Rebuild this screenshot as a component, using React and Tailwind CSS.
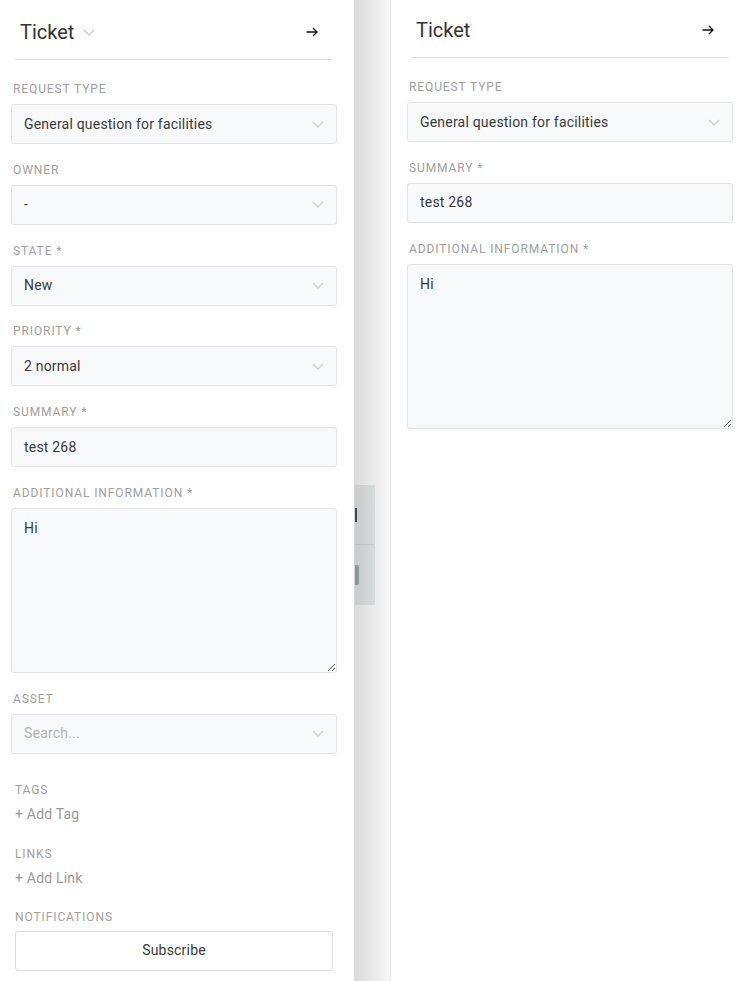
import React from "react";

const font = { fontFamily: "Roboto, 'Noto Sans', sans-serif" };

function Chevron({ className = "" }) {
  return (
    <svg width="12" height="7" viewBox="0 0 12 7" className={className} fill="none">
      <path d="M1 1 L6 6 L11 1" stroke="currentColor" strokeWidth="1.4" />
    </svg>
  );
}

function Arrow() {
  return (
    <svg width="12" height="10" viewBox="0 0 12 10" fill="none">
      <path d="M0.5 5 H11 M7 1 L11 5 L7 9" stroke="#111" strokeWidth="1.3" />
    </svg>
  );
}

function Label({ children, className = "" }) {
  return (
    <div className={`pt-[1px] text-[12px] leading-[16px] tracking-[0.9px] uppercase text-[#a0a0a0] pl-[2px] ${className}`}>
      {children}
    </div>
  );
}

function Select({ label, value, placeholder }) {
  return (
    <div className="mb-[16.8px]">
      <Label>{label}</Label>
      <div className="mt-[7px] h-[40px] rounded-[3px] border border-[#e3e4e6] bg-[#f8f9fa] flex items-center justify-between pl-[12px] pr-[12px]">
        <span className={`text-[14px] tracking-[0.2px] ${placeholder ? "text-[#b3b3b3]" : "text-[#3a3a3a]"}`}>{value}</span>
        <Chevron className="text-[#cfcfcf]" />
      </div>
    </div>
  );
}

function Input({ label, value }) {
  return (
    <div className="mb-[16.8px]">
      <Label>{label}</Label>
      <div className="mt-[7px] h-[40px] rounded-[3px] border border-[#e3e4e6] bg-[#f8f9fa] flex items-center pl-[12px]">
        <span className="text-[14px] tracking-[0.2px] text-[#3a3a3a]">{value}</span>
      </div>
    </div>
  );
}

function Area({ label, value }) {
  return (
    <div className="mb-[16.8px]">
      <Label>{label}</Label>
      <textarea
        readOnly
        defaultValue={value}
        style={font}
        className="mt-[7px] block w-full h-[165px] rounded-[3px] border border-[#e3e4e6] bg-[#f8f9fa] px-[12px] py-[9px] text-[14px] leading-[20px] tracking-[0.2px] text-[#3a3a3a] outline-none resize-y"
      />
    </div>
  );
}

function Header({ chevron, className = "" }) {
  return (
    <div className={`flex items-center justify-between border-b border-[#e2e2e2] ${className}`}>
      <div className="flex items-center">
        <span className="text-[20px] leading-[28px] text-[#333]">Ticket</span>
        {chevron && <Chevron className="ml-[9px] text-[#cccccc]" />}
      </div>
      <Arrow />
    </div>
  );
}

const smallLabel = "pt-[1px] text-[12px] leading-[16px] tracking-[0.9px] uppercase text-[#a0a0a0]";

export default function App() {
  return (
    <div style={font} className="flex w-[741px] h-[981px] overflow-hidden bg-white">
      {/* Left overlay panel */}
      <aside className="w-[355px] shrink-0 bg-white border-r border-[#d6d6d6] relative z-10">
        <Header chevron className="ml-[15px] mr-[21px] pl-[5px] pr-[15px] pt-[18px] pb-[13px]" />
        <div className="pl-[11px] pr-[17px] mt-[20px]">
          <Select label="Request Type" value="General question for facilities" />
          <Select label="Owner" value="-" />
          <Select label="State *" value="New" />
          <Select label="Priority *" value="2 normal" />
          <Input label="Summary *" value="test 268" />
          <Area label="Additional Information *" value="Hi" />
          <Select label="Asset" value="Search..." placeholder />
        </div>
        <div className="pl-[15px] pr-[21px] mt-[27px]">
          <div className={smallLabel}>Tags</div>
          <div className="mt-[6px] text-[14px] leading-[20px] tracking-[0.2px] text-[#9a9a9a]">+ Add Tag</div>
          <div className={`mt-[21px] ${smallLabel}`}>Links</div>
          <div className="mt-[6px] text-[14px] leading-[20px] tracking-[0.2px] text-[#9a9a9a]">+ Add Link</div>
          <div className={`mt-[20px] ${smallLabel}`}>Notifications</div>
          <div className="mt-[6px] h-[40px] rounded-[3px] border border-[#dedede] bg-white flex items-center justify-center text-[14px] tracking-[0.2px] text-[#3a3a3a]">
            Subscribe
          </div>
        </div>
      </aside>

      {/* Middle shadowed strip showing underlying page */}
      <div className="relative w-[35px] shrink-0 bg-white">
        <div className="mt-[485px] w-[20px] h-[120px] bg-[#e9eced] flex flex-col">
          <div className="h-[60px] border-b border-[#d8dcde] flex items-center">
            <div className="w-[2px] h-[14px] bg-[#4a4f53]" />
          </div>
          <div className="flex-1 flex items-center">
            <div className="w-[4px] h-[20px] bg-[#9fb0b8] rounded-r-[2px]" />
          </div>
        </div>
        <div className="pointer-events-none absolute inset-0 bg-gradient-to-r from-[rgba(0,0,0,0.14)] to-[rgba(0,0,0,0.03)]" />
      </div>

      {/* Right panel */}
      <section className="flex-1 border-l border-[#e4e4e4]">
        <Header className="ml-[20px] mr-[12px] pl-[5px] pr-[15px] pt-[16px] pb-[13px]" />
        <div className="pl-[16px] pr-[8px] mt-[20px]">
          <Select label="Request Type" value="General question for facilities" />
          <Input label="Summary *" value="test 268" />
          <Area label="Additional Information *" value="Hi" />
        </div>
      </section>
    </div>
  );
}
